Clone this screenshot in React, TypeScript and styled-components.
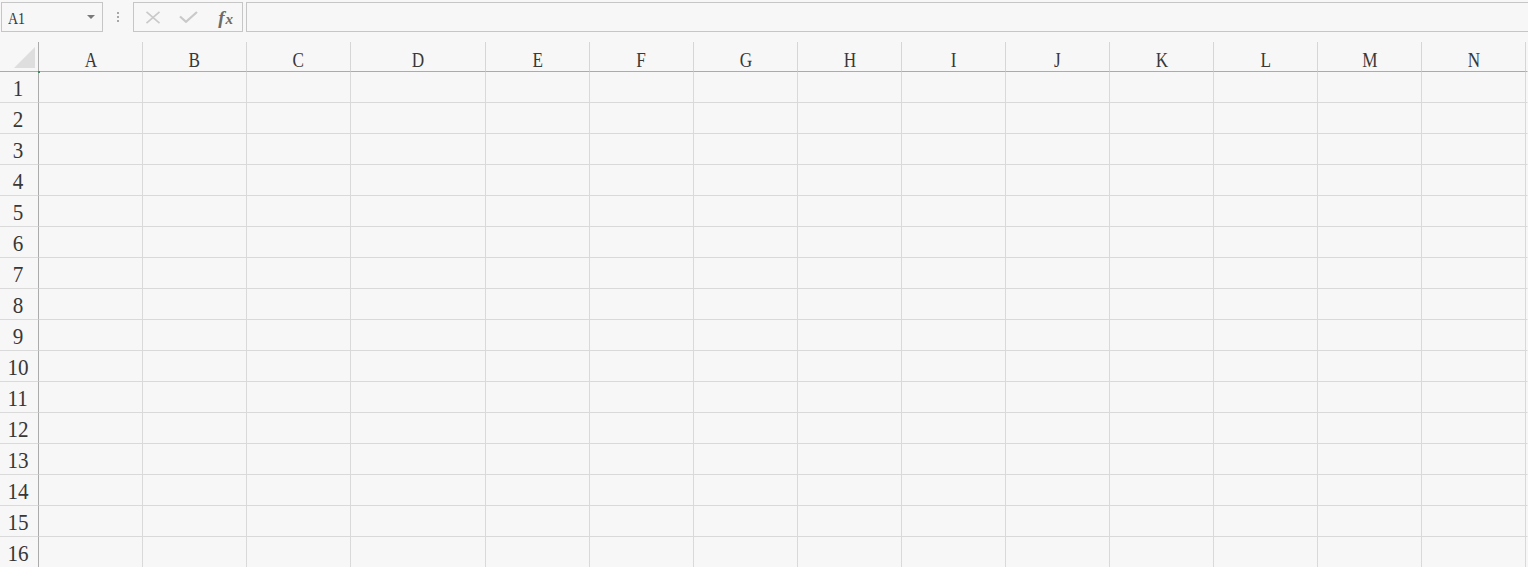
import { createGlobalStyle, styled } from "styled-components";

const COLUMNS = ["A", "B", "C", "D", "E", "F", "G", "H", "I", "J", "K", "L", "M", "N"];
const WIDTHS: Record<string, number> = { D: 135 };
const ROWS = Array.from({ length: 17 }, (_, i) => i + 1);

const GlobalStyle = createGlobalStyle`
  html, body {
    margin: 0;
    padding: 0;
    background: #f7f7f7;
    overflow: hidden;
  }
  * {
    box-sizing: border-box;
  }
`;

const Page = styled.div`
  width: 1528px;
  height: 567px;
  overflow: hidden;
  background: #f7f7f7;
  font-family: "Liberation Serif", "Times New Roman", serif;
  color: #383838;
`;

const FormulaBar = styled.div`
  display: flex;
  align-items: stretch;
  height: 30px;
  margin: 2px 0 10px 1px;
`;

const NameBox = styled.div`
  position: relative;
  width: 102px;
  border: 1px solid #c6c6c6;
  padding: 7px 0 0 6px;
  font-size: 17px;
  line-height: 1;
`;

const NameText = styled.span`
  display: inline-block;
  transform: scaleX(0.82);
  transform-origin: left center;
`;

const DropArrow = styled.span`
  position: absolute;
  right: 7px;
  top: 12px;
  width: 0;
  height: 0;
  border-left: 4px solid transparent;
  border-right: 4px solid transparent;
  border-top: 4px solid #7a7a7a;
`;

const Dots = styled.div`
  width: 30px;
  display: flex;
  flex-direction: column;
  align-items: center;
  justify-content: center;
  gap: 2px;
  padding-right: 1px;

  span {
    width: 2px;
    height: 2px;
    background: #a8a8a8;
  }
`;

const ButtonGroup = styled.div`
  display: flex;
  width: 110px;
  border: 1px solid #c6c6c6;
  padding-left: 1px;
  margin-right: 3px;
`;

const BarButton = styled.div`
  width: 36px;
  display: flex;
  align-items: center;
  justify-content: center;
`;

const Fx = styled.span`
  font-style: italic;
  font-weight: bold;
  color: #6b6b6b;
  font-size: 19px;
  line-height: 1;
  padding-left: 3px;

  small {
    font-size: 15px;
    margin-left: 1px;
  }
`;

const FormulaInput = styled.div`
  flex: 1;
  border: 1px solid #c6c6c6;
  border-right: none;
`;

const Sheet = styled.div`
  display: grid;
  grid-template-columns: 39px ${COLUMNS.map((c) => `${WIDTHS[c] ?? 104}px`).join(" ")} 1fr;
  grid-template-rows: 30px;
  grid-auto-rows: 31px;
`;

const Corner = styled.div`
  position: relative;
  border-right: 1px solid #ababab;
  border-bottom: 1px solid #ababab;

  svg {
    position: absolute;
    left: 14px;
    top: 5px;
  }

  &::after {
    content: "";
    position: absolute;
    right: -2px;
    bottom: -2px;
    width: 2px;
    height: 2px;
    background: #3f8a5c;
  }
`;

const ColHeader = styled.div<{ $last?: boolean }>`
  border-right: 1px solid ${(p) => (p.$last ? "transparent" : "#d6d6d6")};
  border-bottom: 1px solid #ababab;
  display: flex;
  justify-content: center;
  padding-top: 7px;
  font-size: 22px;
  line-height: 1;
`;

const RowHeader = styled.div`
  border-right: 1px solid #ababab;
  border-bottom: 1px solid #dadada;
  display: flex;
  justify-content: center;
  padding: 4px 2px 0 0;
  font-size: 24px;
  line-height: 1;
`;

const Cell = styled.div<{ $last?: boolean }>`
  border-right: 1px solid ${(p) => (p.$last ? "transparent" : "#d9d9d9")};
  border-bottom: 1px solid #d9d9d9;
`;

const Label = styled.span<{ $scale: number }>`
  display: inline-block;
  transform: scaleX(${(p) => p.$scale});
`;

const CrossIcon = () => (
  <svg width="16" height="13" viewBox="0 0 16 13">
    <path d="M1.5 0.8 L14.5 12.2 M14.5 0.8 L1.5 12.2" stroke="#c9c9c9" strokeWidth="1.6" fill="none" />
  </svg>
);

const CheckIcon = () => (
  <svg width="19" height="12" viewBox="0 0 19 12">
    <path d="M1 5.5 L7 10.8 L18 1" stroke="#c9c9c9" strokeWidth="2.2" fill="none" />
  </svg>
);

const CornerTriangle = () => (
  <svg width="22" height="22" viewBox="0 0 22 22">
    <polygon points="21,0 21,21 0,21" fill="#dedede" />
  </svg>
);

export default function App() {
  return (
    <Page>
      <GlobalStyle />
      <FormulaBar>
        <NameBox>
          <NameText>A1</NameText>
          <DropArrow />
        </NameBox>
        <Dots>
          <span />
          <span />
          <span />
        </Dots>
        <ButtonGroup>
          <BarButton>
            <CrossIcon />
          </BarButton>
          <BarButton>
            <CheckIcon />
          </BarButton>
          <BarButton>
            <Fx>
              f<small>x</small>
            </Fx>
          </BarButton>
        </ButtonGroup>
        <FormulaInput />
      </FormulaBar>

      <Sheet>
        <Corner>
          <CornerTriangle />
        </Corner>
        {COLUMNS.map((c) => (
          <ColHeader key={c}>
            <Label $scale={0.78}>{c}</Label>
          </ColHeader>
        ))}
        <ColHeader $last />

        {ROWS.map((r) => (
          <Row key={r} index={r} />
        ))}
      </Sheet>
    </Page>
  );
}

const Row = ({ index }: { index: number }) => (
  <>
    <RowHeader>
      <Label $scale={0.88}>{index}</Label>
    </RowHeader>
    {COLUMNS.map((c) => (
      <Cell key={c} />
    ))}
    <Cell $last />
  </>
);
